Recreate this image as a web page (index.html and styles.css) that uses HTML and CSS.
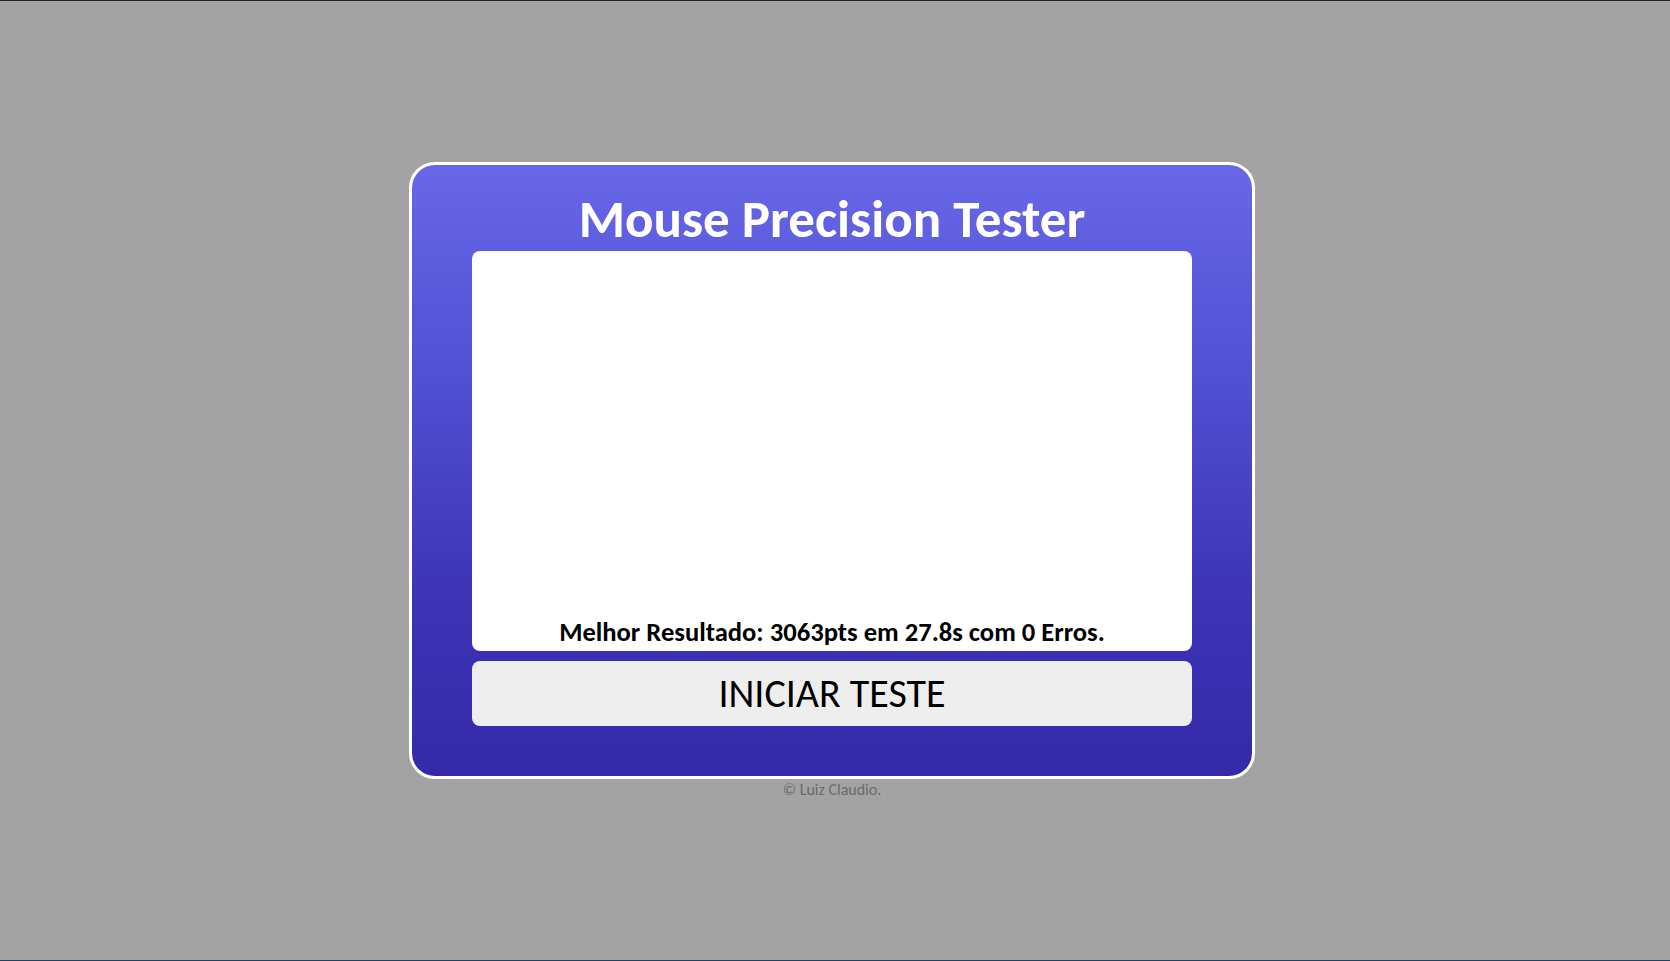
FILE: index.html
```html
<!DOCTYPE html>
<html lang="pt-BR">
<head>
<meta charset="utf-8">
<title>Mouse Precision Tester</title>
<link rel="stylesheet" href="styles.css">
</head>
<body>
<main class="page">
  <section class="card">
    <h1 class="title">Mouse Precision Tester</h1>
    <div class="board">
      <p class="best">Melhor Resultado: 3063pts em 27.8s com 0 Erros.</p>
    </div>
    <button class="start" type="button">INICIAR TESTE</button>
  </section>
  <footer class="credit">© Luiz Claudio.</footer>
</main>
</body>
</html>
```

FILE: styles.css
```css
html, body {
  margin: 0;
  padding: 0;
}

body {
  height: 100vh;
  box-sizing: border-box;
  background: #a3a3a3;
  border-top: 1px solid #222222;
  border-bottom: 1px solid #1c4564;
  font-family: "Carlito", "Calibri", "Lato", "Liberation Sans", sans-serif;
}

.page {
  display: flex;
  flex-direction: column;
  align-items: center;
  padding-top: 161px;
  padding-right: 6px;
}

.card {
  width: 846px;
  box-sizing: border-box;
  border: 3px solid #ffffff;
  border-radius: 26px;
  background: linear-gradient(180deg, #6767e8 0%, #5050d2 35%, #3d34b6 70%, #3429a8 100%);
  padding: 0 60px 50px;
  display: flex;
  flex-direction: column;
}

.title {
  margin: 0;
  height: 86px;
  box-sizing: border-box;
  padding-top: 27px;
  text-align: center;
  color: #ffffff;
  font-size: 53px;
  line-height: 55px;
  font-weight: 700;
  white-space: nowrap;
}

.board {
  height: 400px;
  background: #ffffff;
  border-radius: 8px;
  display: flex;
  flex-direction: column;
  justify-content: flex-end;
  align-items: center;
}

.best {
  margin: 0 0 4px;
  font-size: 26.6px;
  font-weight: 700;
  line-height: 30px;
  color: #000000;
}

.start {
  margin-top: 10px;
  height: 65px;
  border: none;
  border-radius: 8px;
  background: #eeeeee;
  color: #000000;
  font-family: inherit;
  font-size: 40px;
  line-height: 65px;
  padding: 0;
}

.credit {
  margin-top: 1px;
  font-size: 16px;
  line-height: 20px;
  color: #6a6a6a;
}
```
